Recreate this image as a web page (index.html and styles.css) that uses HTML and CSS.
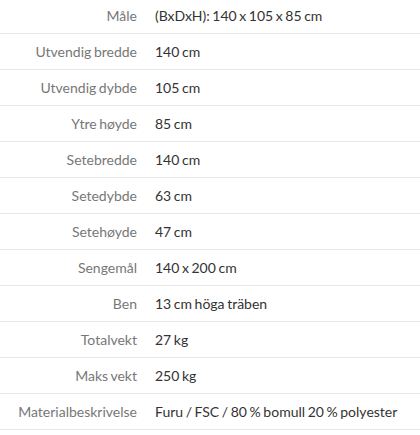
FILE: index.html
```html
<!DOCTYPE html>
<html lang="no">
<head>
<meta charset="utf-8">
<link rel="stylesheet" href="styles.css">
</head>
<body>
<dl class="specs">
  <div class="row"><dt>Måle</dt><dd>(BxDxH): 140 x 105 x 85 cm</dd></div>
  <div class="row"><dt>Utvendig bredde</dt><dd>140 cm</dd></div>
  <div class="row"><dt>Utvendig dybde</dt><dd>105 cm</dd></div>
  <div class="row"><dt>Ytre høyde</dt><dd>85 cm</dd></div>
  <div class="row"><dt>Setebredde</dt><dd>140 cm</dd></div>
  <div class="row"><dt>Setedybde</dt><dd>63 cm</dd></div>
  <div class="row"><dt>Setehøyde</dt><dd>47 cm</dd></div>
  <div class="row"><dt>Sengemål</dt><dd>140 x 200 cm</dd></div>
  <div class="row"><dt>Ben</dt><dd>13 cm höga träben</dd></div>
  <div class="row"><dt>Totalvekt</dt><dd>27 kg</dd></div>
  <div class="row"><dt>Maks vekt</dt><dd>250 kg</dd></div>
  <div class="row"><dt>Materialbeskrivelse</dt><dd>Furu / FSC / 80 % bomull 20 % polyester</dd></div>
</dl>
</body>
</html>
```

FILE: styles.css
```css
html, body {
  margin: 0;
  padding: 0;
  background: #fff;
}
body {
  font-family: Lato, "Open Sans", sans-serif;
  font-size: 14px;
  word-spacing: -1px;
}
.specs {
  margin: -2px 0 0 0;
  padding: 0;
}
.row {
  display: grid;
  grid-template-columns: 147px 1fr;
  height: 35px;
  align-items: center;
  border-bottom: 1px solid #e6e6e6;
}
.row dt {
  text-align: right;
  padding-right: 10px;
  color: #777;
}
.row dd {
  margin: 0;
  padding-left: 8px;
  color: #333;
}
```
